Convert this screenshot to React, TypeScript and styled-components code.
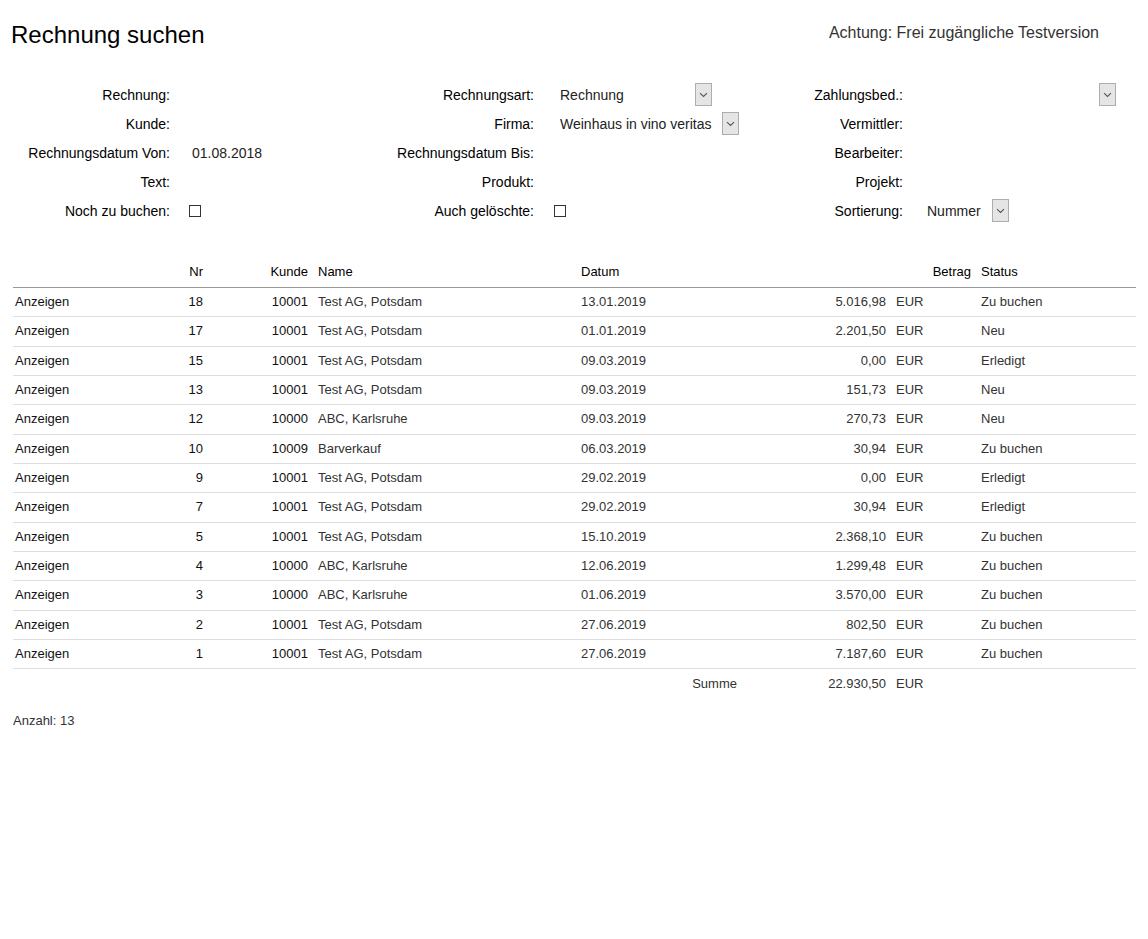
import React from 'react';
import styled, { createGlobalStyle } from 'styled-components';

const GlobalStyle = createGlobalStyle`
  body {
    margin: 0;
    background: #fff;
    font-family: 'Liberation Sans', Arial, sans-serif;
    color: #000;
  }
`;

const Page = styled.div`
  padding: 0 12px 0 13px;
`;

const Header = styled.div`
  display: flex;
  justify-content: space-between;
  align-items: flex-start;
  padding-top: 20px;
  margin-left: -2px;
`;

const Title = styled.h1`
  margin: 0;
  font-size: 24px;
  font-weight: normal;
  line-height: 30px;
`;

const Notice = styled.div`
  font-size: 16px;
  color: #333;
  line-height: 24px;
  margin-top: 1px;
  margin-right: 37px;
`;

const Form = styled.div`
  display: grid;
  grid-template-columns: 157px 210px 154px 226px 143px 213px;
  grid-auto-rows: 29px;
  margin-top: 30px;
  font-size: 14px;
`;

const Label = styled.div`
  text-align: right;
  display: flex;
  align-items: center;
  justify-content: flex-end;
  white-space: nowrap;
`;

const Value = styled.div<{ $pad: number }>`
  display: flex;
  align-items: center;
  padding-left: ${(p) => p.$pad}px;
  color: #222;
  white-space: nowrap;
`;

const SelectBox = styled.div<{ $width?: number }>`
  display: flex;
  align-items: center;
  justify-content: space-between;
  gap: 11px;
  width: ${(p) => (p.$width ? `${p.$width}px` : 'auto')};
`;

const SelectButton = styled.span`
  width: 15px;
  height: 21px;
  border: 1px solid #adadad;
  background: #e5e5e5;
  display: flex;
  align-items: center;
  justify-content: center;
`;

const Check = styled.span<{ $offset: number }>`
  width: 10px;
  height: 10px;
  border: 1.5px solid #333;
  margin-left: ${(p) => p.$offset}px;
`;

const Table = styled.table`
  width: 1123px;
  border-collapse: collapse;
  table-layout: fixed;
  margin-top: 32px;
  font-size: 13px;
`;

const Th = styled.th<{ $align?: string }>`
  font-weight: normal;
  text-align: ${(p) => p.$align || 'left'};
  padding: 6px 5px 7px;
  line-height: 17px;
  border-bottom: 1px solid #999;
  color: #000;
`;

const Td = styled.td<{ $align?: string; $dark?: boolean }>`
  text-align: ${(p) => p.$align || 'left'};
  padding: 6px 5px;
  line-height: 16.33px;
  border-bottom: 1px solid #ddd;
  color: ${(p) => (p.$dark ? '#111' : '#333')};
  white-space: nowrap;
  &:first-child {
    padding-left: 2px;
  }
`;

const SumTd = styled(Td)`
  border-bottom: none;
  padding-top: 7px;
`;

const Count = styled.div`
  font-size: 13px;
  color: #333;
  margin-top: 14px;
`;

const Chevron = () => (
  <svg width="9" height="6" viewBox="0 0 9 6">
    <path d="M1 1.2 L4.5 4.5 L8 1.2" fill="none" stroke="#555" strokeWidth="1.1" />
  </svg>
);

const Select = ({ value, width }: { value: string; width?: number }) => (
  <SelectBox $width={width}>
    <span>{value}</span>
    <SelectButton>
      <Chevron />
    </SelectButton>
  </SelectBox>
);

const rows = [
  ['18', '10001', 'Test AG, Potsdam', '13.01.2019', '5.016,98', 'Zu buchen'],
  ['17', '10001', 'Test AG, Potsdam', '01.01.2019', '2.201,50', 'Neu'],
  ['15', '10001', 'Test AG, Potsdam', '09.03.2019', '0,00', 'Erledigt'],
  ['13', '10001', 'Test AG, Potsdam', '09.03.2019', '151,73', 'Neu'],
  ['12', '10000', 'ABC, Karlsruhe', '09.03.2019', '270,73', 'Neu'],
  ['10', '10009', 'Barverkauf', '06.03.2019', '30,94', 'Zu buchen'],
  ['9', '10001', 'Test AG, Potsdam', '29.02.2019', '0,00', 'Erledigt'],
  ['7', '10001', 'Test AG, Potsdam', '29.02.2019', '30,94', 'Erledigt'],
  ['5', '10001', 'Test AG, Potsdam', '15.10.2019', '2.368,10', 'Zu buchen'],
  ['4', '10000', 'ABC, Karlsruhe', '12.06.2019', '1.299,48', 'Zu buchen'],
  ['3', '10000', 'ABC, Karlsruhe', '01.06.2019', '3.570,00', 'Zu buchen'],
  ['2', '10001', 'Test AG, Potsdam', '27.06.2019', '802,50', 'Zu buchen'],
  ['1', '10001', 'Test AG, Potsdam', '27.06.2019', '7.187,60', 'Zu buchen'],
];

function App() {
  return (
    <Page>
      <GlobalStyle />
      <Header>
        <Title>Rechnung suchen</Title>
        <Notice>Achtung: Frei zugängliche Testversion</Notice>
      </Header>

      <Form>
        <Label>Rechnung:</Label>
        <Value $pad={22} />
        <Label>Rechnungsart:</Label>
        <Value $pad={26}>
          <Select value="Rechnung" width={152} />
        </Value>
        <Label>Zahlungsbed.:</Label>
        <Value $pad={24}>
          <Select value="" width={190} />
        </Value>

        <Label>Kunde:</Label>
        <Value $pad={22} />
        <Label>Firma:</Label>
        <Value $pad={26}>
          <Select value="Weinhaus in vino veritas" />
        </Value>
        <Label>Vermittler:</Label>
        <Value $pad={24} />

        <Label>Rechnungsdatum Von:</Label>
        <Value $pad={22}>01.08.2018</Value>
        <Label>Rechnungsdatum Bis:</Label>
        <Value $pad={26} />
        <Label>Bearbeiter:</Label>
        <Value $pad={24} />

        <Label>Text:</Label>
        <Value $pad={22} />
        <Label>Produkt:</Label>
        <Value $pad={26} />
        <Label>Projekt:</Label>
        <Value $pad={24} />

        <Label>Noch zu buchen:</Label>
        <Value $pad={22}>
          <Check $offset={-3} />
        </Value>
        <Label>Auch gelöschte:</Label>
        <Value $pad={26}>
          <Check $offset={-6} />
        </Value>
        <Label>Sortierung:</Label>
        <Value $pad={24}>
          <Select value="Nummer" />
        </Value>
      </Form>

      <Table>
        <colgroup>
          <col style={{ width: 137 }} />
          <col style={{ width: 58 }} />
          <col style={{ width: 105 }} />
          <col style={{ width: 263 }} />
          <col style={{ width: 166 }} />
          <col style={{ width: 149 }} />
          <col style={{ width: 85 }} />
          <col />
        </colgroup>
        <thead>
          <tr>
            <Th />
            <Th $align="right">Nr</Th>
            <Th $align="right">Kunde</Th>
            <Th>Name</Th>
            <Th>Datum</Th>
            <Th $align="right" colSpan={2}>
              Betrag
            </Th>
            <Th>Status</Th>
          </tr>
        </thead>
        <tbody>
          {rows.map((r) => (
            <tr key={r[0]}>
              <Td $dark>Anzeigen</Td>
              <Td $align="right" $dark>
                {r[0]}
              </Td>
              <Td $align="right" $dark>
                {r[1]}
              </Td>
              <Td>{r[2]}</Td>
              <Td>{r[3]}</Td>
              <Td $align="right">{r[4]}</Td>
              <Td>EUR</Td>
              <Td>{r[5]}</Td>
            </tr>
          ))}
          <tr>
            <SumTd />
            <SumTd />
            <SumTd />
            <SumTd />
            <SumTd $align="right">Summe</SumTd>
            <SumTd $align="right">22.930,50</SumTd>
            <SumTd>EUR</SumTd>
            <SumTd />
          </tr>
        </tbody>
      </Table>
      <Count>Anzahl: 13</Count>
    </Page>
  );
}

export default App;
